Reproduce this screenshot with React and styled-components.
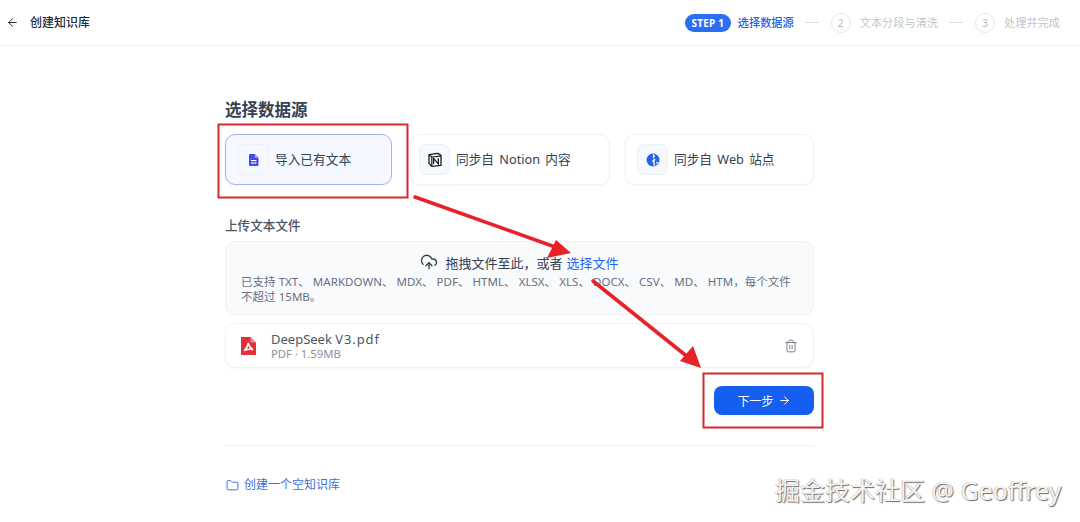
import React from 'react';
import styled, { createGlobalStyle } from 'styled-components';
import { ArrowLeft, ArrowRight, CloudUpload, Folder, Trash2 } from 'lucide-react';

const GlobalStyle = createGlobalStyle`
  html, body {
    margin: 0;
    padding: 0;
    height: 100%;
    background: #fff;
    overflow: hidden;
  }
  body {
    font-family: "Noto Sans", "Noto Sans CJK SC", sans-serif;
    color: #354052;
  }
`;

const Page = styled.div`
  position: relative;
  width: 1080px;
  height: 522px;
  overflow: hidden;
`;

const Header = styled.header`
  display: flex;
  align-items: center;
  justify-content: space-between;
  height: 45px;
  padding: 0 20px 0 6px;
  border-bottom: 1px solid #f1f2f4;
  box-sizing: content-box;
`;

const BackRow = styled.div`
  display: flex;
  align-items: center;
  gap: 11px;
  color: #1f2a3c;
`;

const PageTitle = styled.span`
  font-size: 12px;
  font-weight: 500;
  line-height: 16px;
`;

const Steps = styled.div`
  display: flex;
  align-items: center;
`;

const StepBadge = styled.span`
  display: inline-flex;
  align-items: center;
  justify-content: center;
  width: 46px;
  height: 18px;
  border-radius: 9px;
  background: #2b6ef6;
  color: #fff;
  font-size: 10px;
  font-weight: 700;
  letter-spacing: 0.2px;
`;

const StepLabel = styled.span`
  font-size: 11.2px;
  line-height: 16px;
  white-space: nowrap;
  margin-left: ${(p) => (p.$active ? '7px' : '9px')};
  color: ${(p) => (p.$active ? '#2563e8' : '#c3c6cc')};
  font-weight: ${(p) => (p.$active ? 500 : 400)};
`;

const StepDash = styled.span`
  width: 14px;
  height: 1px;
  margin: 0 12px 0 11px;
  background: #dcdfe4;
`;

const StepNum = styled.span`
  display: inline-flex;
  align-items: center;
  justify-content: center;
  width: 20px;
  height: 20px;
  box-sizing: border-box;
  border: 1px solid #e7e8eb;
  border-radius: 50%;
  color: #b4b7bd;
  font-size: 10px;
`;

const Main = styled.main`
  width: 589px;
  margin-left: 225px;
  padding-top: 53px;
`;

const Heading = styled.h1`
  margin: 0 0 13px;
  font-size: 16.5px;
  font-weight: 600;
  line-height: 22px;
  color: #354052;
`;

const CardRow = styled.div`
  display: flex;
  align-items: stretch;
`;

const Card = styled.div`
  display: flex;
  align-items: center;
  gap: 6px;
  width: ${(p) => p.$w}px;
  margin-left: ${(p) => p.$ml || 0}px;
  height: 51px;
  padding-left: ${(p) => p.$pl}px;
  box-sizing: border-box;
  border-radius: 10px;
  border: 1px solid ${(p) => (p.$active ? '#9db8e8' : '#f1f2f5')};
  background: ${(p) => (p.$active ? '#f5f8ff' : '#fff')};
  box-shadow: 0 1px 2px rgba(16, 24, 40, 0.04);
  font-size: 12.7px;
  word-spacing: 2px;
  color: #354052;
`;

const CardLabel = styled.span`
  position: relative;
  top: -1px;
`;

const IconTile = styled.span`
  display: flex;
  align-items: center;
  justify-content: center;
  width: 29px;
  height: 29px;
  border-radius: 7px;
  border: 1px solid #edf0f5;
  background: #f5f8ff;
  flex: none;
`;

const SectionLabel = styled.div`
  margin-top: 32px;
  font-size: 12.6px;
  font-weight: 500;
  line-height: 18px;
  color: #4b5565;
`;

const DropZone = styled.div`
  margin-top: 6px;
  height: 74px;
  box-sizing: border-box;
  padding: 10px 15px 0;
  border: 1px solid #f0f2f5;
  border-radius: 10px;
  background: #f9fafc;
`;

const DropLine = styled.div`
  display: flex;
  align-items: center;
  justify-content: center;
  gap: 7px;
  height: 20px;
  font-size: 13px;
  color: #354052;
`;

const LinkText = styled.span`
  color: #2563e8;
  margin-left: -3px;
`;

const HintText = styled.div`
  margin-top: 2px;
  font-size: 11.5px;
  letter-spacing: 0.04px;
  line-height: 15px;
  color: #676f83;
`;

const FileRow = styled.div`
  display: flex;
  align-items: center;
  margin-top: 8px;
  height: 45px;
  box-sizing: border-box;
  padding: 0 15px 0 14px;
  border: 1px solid #f1f2f5;
  border-radius: 10px;
  box-shadow: 0 1px 2px rgba(16, 24, 40, 0.03);
`;

const FileInfo = styled.div`
  display: flex;
  flex-direction: column;
  margin-left: 15px;
  flex: 1;
`;

const FileName = styled.span`
  font-size: 13px;
  line-height: 16px;
  color: #4b5565;
`;

const FileMeta = styled.span`
  font-size: 11.3px;
  line-height: 13px;
  color: #8a919f;
`;

const ActionRow = styled.div`
  display: flex;
  justify-content: flex-end;
  margin-top: 18px;
`;

const NextButton = styled.button`
  display: flex;
  align-items: center;
  justify-content: center;
  gap: 4px;
  width: 100px;
  height: 29px;
  border: none;
  border-radius: 8px;
  background: #155eef;
  color: #fff;
  font-family: inherit;
  font-size: 12px;
`;

const Divider = styled.hr`
  margin: 30px 0 0;
  border: none;
  border-top: 1px solid #eff0f2;
`;

const EmptyLink = styled.div`
  display: flex;
  align-items: center;
  gap: 5px;
  margin-top: 31px;
  padding-left: 1px;
  font-size: 12px;
  line-height: 16px;
  color: #3f6fd8;
`;

const Annotations = styled.svg`
  position: absolute;
  left: 0;
  top: 0;
  pointer-events: none;
`;

const Watermark = styled.div`
  position: absolute;
  left: 775px;
  top: 474px;
  font-size: 25px;
  line-height: 32px;
  white-space: nowrap;
  color: #f4f4f4;
  text-shadow: 1px 1px 1px #6b6b6b, -0.5px -0.5px 0 #b5b5b5;
`;

const SpacedLatin = styled.span`
  letter-spacing: 0.9px;
`;

function DocIcon() {
  return (
    <svg width="14" height="14" viewBox="0 0 14 14">
      <path d="M3.2 1h4.6L11.5 4.7V11.8a1.2 1.2 0 0 1-1.2 1.2H3.2A1.2 1.2 0 0 1 2 11.8V2.2A1.2 1.2 0 0 1 3.2 1z" fill="#444ce7" />
      <path d="M7.8 1v3.7h3.7z" fill="#a4a8f5" />
      <rect x="4" y="7" width="5.4" height="1.1" fill="#fff" />
      <rect x="4" y="9.5" width="5.4" height="1.1" fill="#fff" />
    </svg>
  );
}

function NotionIcon() {
  return (
    <svg width="16" height="16" viewBox="0 0 16 16">
      <path d="M2 2.6 10.8 1.4 14 3.4V13.4L4.6 14.4 2 11.4z" fill="#fff" stroke="#1b1b1b" strokeWidth="1.3" strokeLinejoin="round" />
      <path d="M2.4 3 4.8 5 14 4.2" fill="none" stroke="#1b1b1b" strokeWidth="1.2" />
      <path d="M4.8 5V14" stroke="#1b1b1b" strokeWidth="1.2" />
      <path d="M6.6 12V6.4L11.4 12V6.2" fill="none" stroke="#1b1b1b" strokeWidth="1.3" />
    </svg>
  );
}

function GlobeIcon() {
  return (
    <svg width="14" height="14" viewBox="0 0 14 14">
      <circle cx="7" cy="7" r="6.5" fill="#2563e8" />
      <path d="M7.4 0.8 9.2 3 7.6 5 9.6 6.4 8.4 8 9 12.6 7.8 13 7.2 9.2 6 8 8 6 6.6 4z" fill="#fff" />
      <path d="M10.4 8.4 12.4 9.2 10.6 11.4z" fill="#fff" />
    </svg>
  );
}

function PdfIcon() {
  return (
    <svg width="16" height="18" viewBox="0 0 16 18">
      <path d="M1 0h9.5L16 5.5V18H1z" fill="#e5303a" />
      <path d="M10.5 0v5.5H16z" fill="#f3888d" />
      <path d="M8.2 6.2C8.8 9 10 11 12.6 12.4 10 12 7 12.2 4.6 13.4 6.6 11.6 7.8 9 8.2 6.2z" fill="none" stroke="#fff" strokeWidth="1.6" strokeLinejoin="round" />
    </svg>
  );
}

function App() {
  return (
    <Page>
      <GlobalStyle />
      <Header>
        <BackRow>
          <ArrowLeft size={13} strokeWidth={1.8} />
          <PageTitle>创建知识库</PageTitle>
        </BackRow>
        <Steps>
          <StepBadge>STEP 1</StepBadge>
          <StepLabel $active>选择数据源</StepLabel>
          <StepDash />
          <StepNum>2</StepNum>
          <StepLabel>文本分段与清洗</StepLabel>
          <StepDash />
          <StepNum>3</StepNum>
          <StepLabel>处理并完成</StepLabel>
        </Steps>
      </Header>
      <Main>
        <Heading>选择数据源</Heading>
        <CardRow>
          <Card $active $w={167} $pl={12}>
            <IconTile><DocIcon /></IconTile>
            <CardLabel>导入已有文本</CardLabel>
          </Card>
          <Card $w={200} $ml={18} $pl={8}>
            <IconTile><NotionIcon /></IconTile>
            <CardLabel>同步自 Notion 内容</CardLabel>
          </Card>
          <Card $w={189} $ml={15} $pl={11}>
            <IconTile><GlobeIcon /></IconTile>
            <CardLabel>同步自 Web 站点</CardLabel>
          </Card>
        </CardRow>
        <SectionLabel>上传文本文件</SectionLabel>
        <DropZone>
          <DropLine>
            <CloudUpload size={18} strokeWidth={1.8} color="#354052" />
            拖拽文件至此，或者 <LinkText>选择文件</LinkText>
          </DropLine>
          <HintText>
            已支持 TXT、 MARKDOWN、 MDX、 PDF、 HTML、 XLSX、 XLS、 DOCX、 CSV、 MD、 HTM，每个文件不超过 15MB。
          </HintText>
        </DropZone>
        <FileRow>
          <PdfIcon />
          <FileInfo>
            <FileName>DeepSeek <SpacedLatin>V3.pdf</SpacedLatin></FileName>
            <FileMeta>PDF · 1.59MB</FileMeta>
          </FileInfo>
          <Trash2 size={14} strokeWidth={1.5} color="#676f83" />
        </FileRow>
        <ActionRow>
          <NextButton>
            下一步
            <ArrowRight size={13} strokeWidth={1.8} />
          </NextButton>
        </ActionRow>
        <Divider />
        <EmptyLink>
          <Folder size={13} strokeWidth={1.8} />
          创建一个空知识库
        </EmptyLink>
      </Main>

      {/* red markup drawn on top of the screenshot */}
      <Annotations width="1080" height="522" viewBox="0 0 1080 522">
        <rect x="218.5" y="124.5" width="189" height="73" fill="none" stroke="#d32a2f" strokeWidth="2" />
        <rect x="703.5" y="373.5" width="119" height="54" fill="none" stroke="#d32a2f" strokeWidth="2" />
        <path d="M415 197 558 248" stroke="#e8212a" strokeWidth="3.6" strokeLinecap="round" />
        <path d="M571 253 547 258 556 240z" fill="#e8212a" />
        <path d="M593 281 689 358" stroke="#e8212a" strokeWidth="3.6" strokeLinecap="round" />
        <path d="M701 368 680 361 693 346z" fill="#e8212a" />
      </Annotations>
      <Watermark>掘金技术社区 @ Geoffrey</Watermark>
    </Page>
  );
}

export default App;
